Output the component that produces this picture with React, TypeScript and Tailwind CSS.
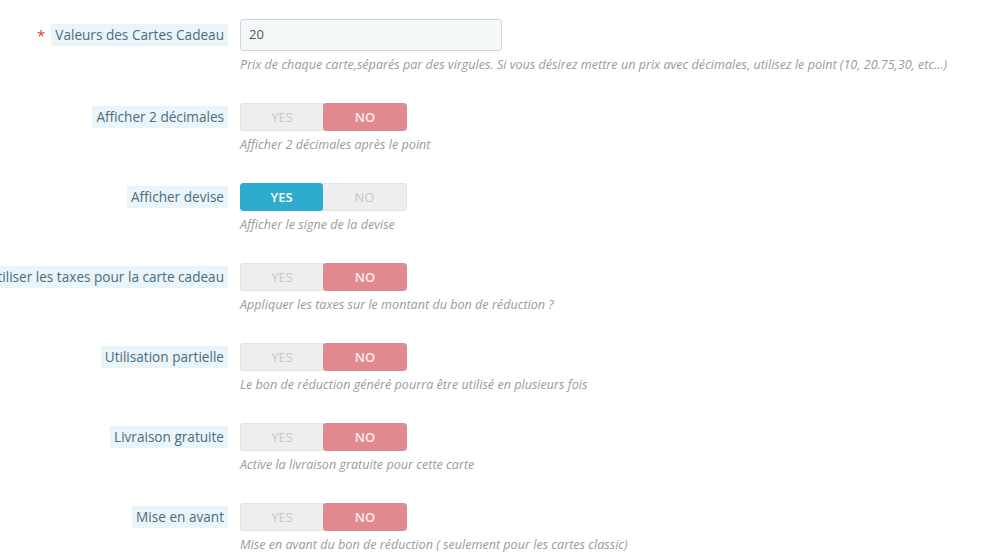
// Gift card settings form: label column on the left, control + italic hint on the right.

type Field = {
  label: string;
  required?: boolean;
  kind: "text" | "switch";
  value?: string;
  on?: boolean;
  help: string;
};

const fields: Field[] = [
  {
    label: "Valeurs des Cartes Cadeau",
    required: true,
    kind: "text",
    value: "20",
    help: "Prix de chaque carte,séparés par des virgules. Si vous désirez mettre un prix avec décimales, utilisez le point (10, 20.75,30, etc...)",
  },
  { label: "Afficher 2 décimales", kind: "switch", on: false, help: "Afficher 2 décimales après le point" },
  { label: "Afficher devise", kind: "switch", on: true, help: "Afficher le signe de la devise" },
  {
    label: "Utiliser les taxes pour la carte cadeau",
    kind: "switch",
    on: false,
    help: "Appliquer les taxes sur le montant du bon de réduction ?",
  },
  {
    label: "Utilisation partielle",
    kind: "switch",
    on: false,
    help: "Le bon de réduction généré pourra être utilisé en plusieurs fois",
  },
  { label: "Livraison gratuite", kind: "switch", on: false, help: "Active la livraison gratuite pour cette carte" },
  {
    label: "Mise en avant",
    kind: "switch",
    on: false,
    help: "Mise en avant du bon de réduction ( seulement pour les cartes classic)",
  },
];

function Switch({ on }: { on: boolean }) {
  return (
    <div className="flex h-[28px] w-[167px] overflow-hidden rounded-[3px] text-[13px] leading-none">
      <div
        className={
          on
            ? "flex w-[83px] items-center justify-center rounded-[3px] bg-[#2eacce] font-semibold text-white"
            : "flex w-[83px] items-center justify-center rounded-l-[3px] border border-r-0 border-[#e2e2e2] bg-[#eeeeee] text-[#c6c6c6]"
        }
      >
        YES
      </div>
      <div
        className={
          !on
            ? "flex w-[84px] items-center justify-center rounded-[3px] bg-[#e0898e] font-semibold text-[#fdeeee]"
            : "flex w-[84px] items-center justify-center rounded-r-[3px] border border-l-0 border-[#e2e2e2] bg-[#eeeeee] text-[#c6c6c6]"
        }
      >
        NO
      </div>
    </div>
  );
}

function Row({ field }: { field: Field }) {
  return (
    <div className="mb-[29px] flex">
      <div className="flex w-[228px] shrink-0 justify-end">
        <div
          className={
            field.kind === "text"
              ? "flex h-[32px] shrink-0 items-center whitespace-nowrap"
              : "flex h-[27px] shrink-0 items-center whitespace-nowrap"
          }
        >
          {field.required && <span className="mr-[6px] text-[15px] text-[#e0393d]">*</span>}
          <span className="bg-[#eaf5fa] px-[4px] py-[1px] text-[13.6px] leading-[20px] text-[#4a6c80]">
            {field.label}
          </span>
        </div>
      </div>
      <div className="ml-[12px] flex flex-col">
        {field.kind === "text" ? (
          <div className="flex h-[32px] w-[262px] items-center rounded-[3px] border border-[#c9d7dd] bg-[#f5f8f9] px-[8px] text-[13px] text-[#555]">
            {field.value}
          </div>
        ) : (
          <Switch on={!!field.on} />
        )}
        <div className="mt-[5px] whitespace-nowrap text-[12.6px] italic leading-[18px] text-[#9a9a9a]">
          {field.help}
        </div>
      </div>
    </div>
  );
}

export default function App() {
  return (
    <div
      className="min-h-[557px] w-[1000px] overflow-hidden bg-white pt-[19px]"
      style={{ fontFamily: '"Open Sans", "Noto Sans", sans-serif' }}
    >
      {fields.map((f, i) => (
        <Row key={i} field={f} />
      ))}
    </div>
  );
}
